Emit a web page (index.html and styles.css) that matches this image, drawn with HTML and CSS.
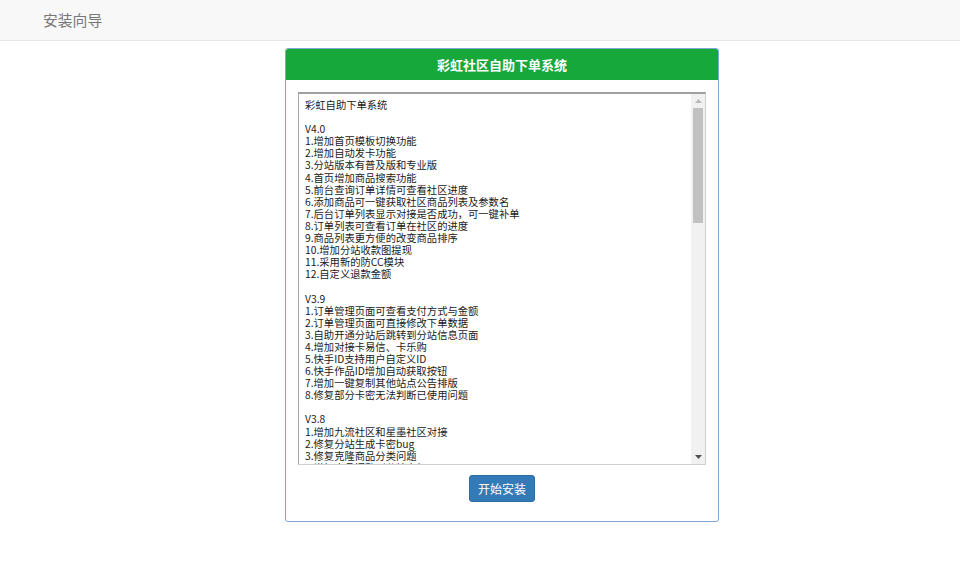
FILE: index.html
```html
<!DOCTYPE html>
<html lang="zh-CN">
<head>
<meta charset="utf-8">
<title>安装向导</title>
<link rel="stylesheet" href="styles.css">
</head>
<body>
<nav class="navbar">
  <span class="brand">安装向导</span>
</nav>
<main class="wrap">
  <section class="panel">
    <header class="panel-heading">彩虹社区自助下单系统</header>
    <div class="panel-body">
      <div class="log-box">
<div class="log-text">彩虹自助下单系统

V4.0
1.增加首页模板切换功能
2.增加自动发卡功能
3.分站版本有普及版和专业版
4.首页增加商品搜索功能
5.前台查询订单详情可查看社区进度
6.添加商品可一键获取社区商品列表及参数名
7.后台订单列表显示对接是否成功，可一键补单
8.订单列表可查看订单在社区的进度
9.商品列表更方便的改变商品排序
10.增加分站收款图提现
11.采用新的防CC模块
12.自定义退款金额

V3.9
1.订单管理页面可查看支付方式与金额
2.订单管理页面可直接修改下单数据
3.自助开通分站后跳转到分站信息页面
4.增加对接卡易信、卡乐购
5.快手ID支持用户自定义ID
6.快手作品ID增加自动获取按钮
7.增加一键复制其他站点公告排版
8.修复部分卡密无法判断已使用问题

V3.8
1.增加九流社区和星墨社区对接
2.修复分站生成卡密bug
3.修复克隆商品分类问题
4.增加商品调整到分站上架</div>
        <div class="scrollbar" aria-hidden="true">
          <div class="sb-btn">
            <svg width="7" height="4" viewBox="0 0 7 4"><path d="M3.5 0 L7 4 L0 4 Z" fill="#b8b8b8"/></svg>
          </div>
          <div class="sb-track"><div class="sb-thumb"></div></div>
          <div class="sb-btn">
            <svg width="7" height="4" viewBox="0 0 7 4"><path d="M0 0 L7 0 L3.5 4 Z" fill="#505050"/></svg>
          </div>
        </div>
      </div>
      <div class="actions">
        <button class="btn" type="button">开始安装</button>
      </div>
    </div>
  </section>
</main>
</body>
</html>
```

FILE: styles.css
```css
* { box-sizing: border-box; }

html, body {
  margin: 0;
  padding: 0;
  background: #ffffff;
  font-family: "Noto Sans CJK SC", "Liberation Sans", sans-serif;
}

.navbar {
  height: 41px;
  background: #f8f8f8;
  border-bottom: 1px solid #e7e7e7;
  display: flex;
  align-items: center;
  padding-left: 43px;
}

.brand {
  color: #777777;
  font-size: 14.8px;
  line-height: 20px;
}

.wrap {
  display: flex;
  justify-content: center;
  padding-top: 7px;
  padding-left: 44px;
}

.panel {
  width: 434px;
  border: 1px solid #7ea7d3;
  border-radius: 3px;
  background: #ffffff;
  overflow: hidden;
}

.panel-heading {
  height: 31px;
  background: #17a83c;
  color: #ffffff;
  font-size: 13px;
  font-weight: bold;
  display: flex;
  align-items: center;
  justify-content: center;
}

.panel-body {
  padding: 12px 12px 19px;
  display: flex;
  flex-direction: column;
  align-items: center;
}

.log-box {
  width: 408px;
  height: 373px;
  display: flex;
  border: 1px solid #d0d0d0;
  border-top: 2px solid #a0a0a0;
  border-left: 1px solid #a8a8a8;
  background: #ffffff;
  overflow: hidden;
}

.log-text {
  flex: 1;
  min-width: 0;
  height: 100%;
  overflow: hidden;
  padding: 5px 6px;
  font-family: "Noto Sans CJK SC", "Liberation Sans", sans-serif;
  font-size: 10.3px;
  line-height: 12.1px;
  color: #1a1a1a;
  white-space: pre;
}

.scrollbar {
  width: 14px;
  flex: none;
  display: flex;
  flex-direction: column;
  background: #f1f1f1;
}

.sb-btn {
  height: 14px;
  flex: none;
  display: flex;
  align-items: center;
  justify-content: center;
}

.sb-btn svg {
  display: block;
}

.sb-track {
  flex: 1;
  padding: 0 2px;
}

.sb-thumb {
  height: 115px;
  background: #c1c1c1;
}

.actions {
  margin-top: 10px;
  display: flex;
  justify-content: center;
}

.btn {
  width: 66px;
  height: 27px;
  padding: 0;
  border: 1px solid #2e6da4;
  border-radius: 3px;
  background: #337ab7;
  color: #ffffff;
  font-family: "Noto Sans CJK SC", "Liberation Sans", sans-serif;
  font-size: 12px;
  cursor: pointer;
}
```
